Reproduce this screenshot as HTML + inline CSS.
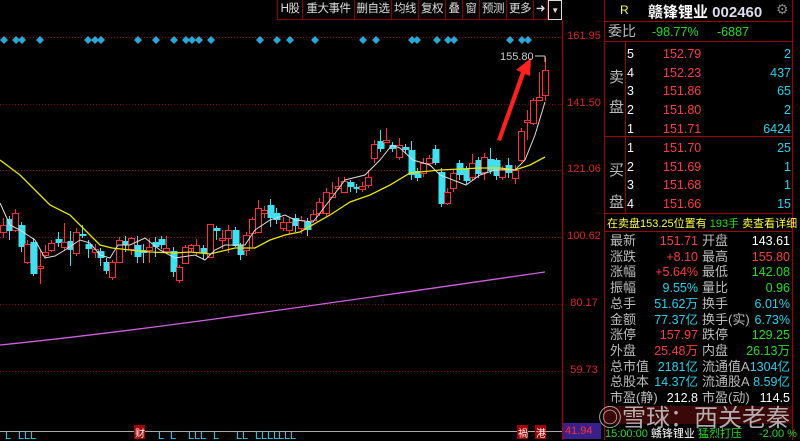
<!DOCTYPE html>
<html><head><meta charset="utf-8"><style>
*{margin:0;padding:0;box-sizing:border-box}
body{width:800px;height:440px;background:#000;overflow:hidden;position:relative;font-family:"Liberation Sans","Noto Sans CJK SC",sans-serif;color:#fff}
.a{position:absolute;white-space:nowrap}
.tb{position:absolute;top:0;height:20px;border-right:1px solid #8b0000;border-bottom:1px solid #8b0000;font-size:11.5px;line-height:19px;text-align:center;overflow:hidden;color:#ddd;background:#050505;letter-spacing:-0.5px}
.ax{position:absolute;left:566px;font-size:11px;color:#e02020;width:36px;text-align:center}
.rp{font-size:12.5px;line-height:15px}
.g{color:#bbb}.r{color:#ff3b3b}.c{color:#22d3ee}.gr{color:#22dd22}.y{color:#ffff40}.w{color:#fff}
.hl{position:absolute;left:605px;width:187px;height:1px;background:#a00000}
</style></head><body>
<svg class="a" style="left:0;top:0" width="566" height="440" id="ch">
<g stroke="#8b0000" stroke-dasharray="1 2" stroke-width="1">
<line x1="0" y1="37.5" x2="562" y2="37.5"/><line x1="0" y1="104.5" x2="562" y2="104.5"/><line x1="0" y1="170.5" x2="562" y2="170.5"/><line x1="0" y1="237.5" x2="562" y2="237.5"/><line x1="0" y1="304.5" x2="562" y2="304.5"/><line x1="0" y1="371.5" x2="562" y2="371.5"/>
</g>
<line x1="562.5" y1="20" x2="562.5" y2="440" stroke="#b00000"/>
<line x1="0" y1="431.5" x2="562" y2="431.5" stroke="#aaa"/>
<path d="M0,345 C150,330 350,300 545,272" stroke="#d060e0" fill="none" stroke-width="1.3"/>
<g id="cd"></g>
<polyline fill="none" stroke="#e6e600" stroke-width="1.3" points="0,160 20,175 40,195 50,205 70,215 85,230 100,245 112,248 130,250 150,252 175,253 190,252 210,254 235,248 255,248 270,240 285,235 300,232 330,215 350,202 370,195 390,185 410,173 440,170 480,168 500,168 515,170 530,165 545,157"/>
<polyline fill="none" stroke="#ddd" stroke-width="1" points="0,203 10,225 20,230 35,240 45,258 55,256 65,250 80,240 90,243 100,255 110,258 118,245 130,245 145,238 160,250 175,258 195,255 205,260 215,250 225,245 245,245 255,230 270,220 285,215 295,220 313,222 330,200 345,180 365,175 380,160 392,145 400,148 413,160 430,165 440,175 466,185 480,175 495,170 515,170 525,160 535,135 545,102"/>
<path d="M497,140 L521,72 L516,70 L531,58 L530,76 L525,74 L501,141 Z" fill="#ff2020"/>
<text x="500" y="60" font-size="11" fill="#ccc" font-family="Liberation Sans">155.80</text>
<line x1="535" y1="56" x2="545" y2="56" stroke="#ccc"/><line x1="545" y1="56" x2="545" y2="62" stroke="#ccc"/>
<g fill="#2aa8d8" id="dm"></g>
<g font-size="11" fill="#22d3ee" font-family="Liberation Sans" id="ll"></g>
<rect x="134" y="425" width="11" height="14" fill="#a00000"/><text x="135" y="437" font-size="10" fill="#fff">财</text>
<rect x="517" y="425" width="11" height="14" fill="#a00000"/><text x="518" y="437" font-size="10" fill="#fff">禍</text>
<rect x="535" y="425" width="11" height="14" fill="#a00000"/><text x="536" y="437" font-size="10" fill="#fff">港</text>
</svg>
<script>
var C=[[3,225,232,218,238,1],[9,219,231,216,240,0],[15,213,230,209,232,1],[21,225,247,222,252,0],[27,244,262,240,264,1],[33,242,274,238,276,0],[40,266,268,250,284,1],[45,252,255,245,258,1],[51,243,250,240,252,1],[58,239,243,232,247,0],[64,242,247,223,250,1],[70,241,250,231,266,0],[76,232,253,228,256,1],[82,234,236,225,238,0],[88,244,249,240,258,0],[95,249,252,244,258,1],[100,251,258,248,266,0],[106,262,271,258,274,0],[112,262,277,260,280,1],[119,240,262,237,263,1],[125,241,245,236,252,0],[131,238,249,237,255,1],[137,245,257,236,263,0],[143,250,253,244,263,0],[149,247,250,238,263,1],[155,242,247,237,257,0],[161,239,245,236,249,0],[166,248,251,236,253,1],[173,251,272,247,277,0],[179,267,280,265,283,1],[185,247,263,245,264,1],[191,245,248,244,252,1],[196,245,252,239,256,1],[203,248,253,245,260,0],[210,224,257,224,258,1],[216,228,231,226,240,0],[222,238,240,230,249,1],[228,230,238,225,253,1],[235,230,246,227,247,0],[240,245,255,243,260,0],[246,235,250,232,256,1],[252,219,233,217,247,1],[258,208,232,200,232,1],[264,210,213,206,218,1],[270,205,218,199,227,0],[276,213,220,208,224,0],[283,222,228,217,231,1],[289,222,230,218,234,1],[295,218,226,214,232,0],[301,220,228,216,234,1],[307,222,230,218,236,0],[313,214,220,210,222,1],[319,202,213,198,216,1],[326,192,213,188,216,1],[332,193,197,182,198,1],[338,186,188,177,190,1],[344,181,192,177,193,1],[350,182,187,180,192,0],[356,187,189,184,193,0],[362,186,189,182,192,1],[368,177,185,170,188,1],[374,144,158,140,163,1],[380,141,149,130,152,0],[386,140,142,128,143,1],[392,145,149,142,152,0],[399,145,157,138,160,1],[405,147,150,144,154,0],[411,150,175,141,180,0],[417,171,178,168,181,0],[423,163,173,158,177,1],[429,158,163,155,166,1],[435,149,163,145,165,0],[441,172,204,168,207,0],[447,192,203,188,205,1],[453,173,188,170,192,1],[459,163,175,160,180,0],[466,169,181,166,184,0],[472,163,177,154,180,1],[478,160,174,157,178,0],[484,157,172,153,180,1],[490,159,171,148,174,0],[496,160,176,158,180,0],[502,169,177,166,180,1],[508,165,173,158,178,0],[515,170,178,165,184,1],[521,131,160,128,162,1],[527,120,122,110,140,1],[533,100,123,98,125,1],[539,97,100,72,100,1],[545,70,95,57,101,1]];
var s='';C.forEach(function(c){var col=c[5]?'#ff3030':'#40e0f0';var x=c[0];s+='<line x1="'+(x+.5)+'" y1="'+c[3]+'" x2="'+(x+.5)+'" y2="'+c[4]+'" stroke="'+col+'"/>';var h=Math.max(c[2]-c[1],1);if(c[5])s+='<rect x="'+(x-2.5)+'" y="'+c[1]+'.5" width="6" height="'+h+'" fill="#000" stroke="'+col+'"/>';else s+='<rect x="'+(x-2.5)+'" y="'+c[1]+'" width="7" height="'+h+'" fill="'+col+'"/>';});
document.getElementById('cd').innerHTML=s;
var D=[4,16,22,40,88,95,101,138,156,174,186,192,199,211,260,277,290,315,363,376,412,417,437,448,454,510,522,528],d='';
D.forEach(function(x){d+='<path d="M'+x+',36 l4,4 -4,4 -4,-4z"/>'});document.getElementById('dm').innerHTML=d;
var L=[5,18,24,30,158,170,188,194,200,213,236,242,255,261,267,273,278,284,290],l='';
L.forEach(function(x){l+='<text x="'+x+'" y="439">L</text>'});document.getElementById('ll').innerHTML=l;
</script>
<div class="a" style="left:277px;top:0;width:1px;height:20px;background:#8b0000"></div>
<div class="tb" style="left:278px;width:25px">H股</div><div class="tb" style="left:303px;width:52px">重大事件</div><div class="tb" style="left:355px;width:37px">删自选</div><div class="tb" style="left:392px;width:27px">均线</div><div class="tb" style="left:419px;width:27px">复权</div><div class="tb" style="left:446px;width:17px">叠</div><div class="tb" style="left:463px;width:17px">窗</div><div class="tb" style="left:480px;width:27px">预测</div><div class="tb" style="left:507px;width:27px">更多</div><div class="tb" style="left:534px;width:14px">➜</div><div class="tb" style="left:548px;width:14px;border:1px solid #ddd;font-size:8px">▼</div>
<div class="ax" style="top:30px">161.95</div><div class="ax" style="top:97px">141.50</div><div class="ax" style="top:163px">121.06</div><div class="ax" style="top:230px">100.62</div><div class="ax" style="top:297px">80.17</div><div class="ax" style="top:364px">59.73</div>
<div class="a" style="left:563px;top:423px;width:38px;height:16px;background:#3a208a;color:#ff3030;font-size:11px;line-height:16px;padding-left:2px">41.94</div>
<div class="a" style="left:604px;top:0;width:1px;height:440px;background:#a00000"></div>
<div class="a" style="left:792px;top:0;width:1px;height:440px;background:#a00000"></div>
<div class="a y" style="left:620px;top:3px;font-size:12px">R</div>
<div class="a" style="left:648px;top:1px;font-size:15px;font-weight:bold;color:#fff">赣锋锂业 <span style="color:#dde">002460</span></div>
<div class="a" style="left:776px;top:1px;font-size:14px;color:#888">⚙</div>
<div class="hl" style="top:21px"></div><div class="hl" style="top:41px"></div><div class="hl" style="top:136px"></div><div class="hl" style="top:213px"></div><div class="hl" style="top:231px"></div>
<div class="a" style="left:625px;top:41px;width:1px;height:172px;background:#a00000"></div>
<div class="a rp g" style="left:608px;top:24px;font-size:14px">委比</div>
<div class="a rp gr" style="left:652px;top:25px">-98.77%</div><div class="a rp gr" style="left:717px;top:25px">-6887</div>
<div class="a g" style="left:609px;top:63px;font-size:15px;line-height:30px">卖<br>盘</div>
<div class="a g" style="left:609px;top:155px;font-size:15px;line-height:32px">买<br>盘</div>
<div class="a rp w" style="left:627px;top:45px;line-height:18.7px">5<br>4<br>3<br>2<br>1</div>
<div class="a rp r" style="left:663px;top:45px;line-height:18.7px">152.79<br>152.23<br>151.86<br>151.80<br>151.71</div>
<div class="a rp c" style="right:9px;top:45px;line-height:18.7px;text-align:right">2<br>437<br>65<br>2<br>6424</div>
<div class="a rp w" style="left:627px;top:139px;line-height:18.7px">1<br>2<br>3<br>4</div>
<div class="a rp r" style="left:663px;top:139px;line-height:18.7px">151.70<br>151.69<br>151.68<br>151.66</div>
<div class="a rp c" style="right:9px;top:139px;line-height:18.7px;text-align:right">25<br>1<br>1<br>15</div>
<div class="a y" style="left:607px;top:215px;font-size:11px">在卖盘153.25位置有 <span class="gr">193手</span> 卖查看详细</div>
<div class="a g" style="left:610px;top:233px;font-size:13px;line-height:15.7px">最新<br>涨跌<br>涨幅<br>振幅<br>总手<br>金额<br>涨停<br>外盘<br>总市值<br>总股本<br>市盈(静)</div>
<div class="a rp" style="right:102px;top:234px;line-height:15.7px;text-align:right"><span class="r">151.71</span><br><span class="r">+8.10</span><br><span class="r">+5.64%</span><br><span class="c">9.55%</span><br><span class="c">51.62万</span><br><span class="c">77.37亿</span><br><span class="r">157.97</span><br><span class="r">25.48万</span><br><span class="c">2181亿</span><br><span class="c">14.37亿</span><br><span class="w">212.8</span></div>
<div class="a g" style="left:702px;top:233px;font-size:13px;line-height:15.7px">开盘<br>最高<br>最低<br>量比<br>换手<br>换手(实)<br>跌停<br>内盘<br>流通值A<br>流通股A<br>市盈(动)</div>
<div class="a rp" style="right:10px;top:234px;line-height:15.7px;text-align:right"><span class="w">143.61</span><br><span class="r">155.80</span><br><span class="gr">142.08</span><br><span class="gr">0.96</span><br><span class="c">6.01%</span><br><span class="c">6.73%</span><br><span class="gr">129.25</span><br><span class="gr">26.13万</span><br><span class="c">1304亿</span><br><span class="c">8.59亿</span><br><span class="w">114.5</span></div>
<div class="a" style="left:605px;top:406px;width:187px;height:18px;background:#3a0808"></div>
<div class="a" style="left:598px;top:398px;font-size:24px;color:#ccc;opacity:.85">◎雪球：西关老秦</div>
<div class="a" style="left:605px;top:425px;font-size:11px"><span class="gr">15:00:00</span> <span class="w">赣锋锂业</span> <span class="gr">猛烈打压</span> <span class="gr" style="margin-left:14px">-2.00 %</span></div>
</body></html>
